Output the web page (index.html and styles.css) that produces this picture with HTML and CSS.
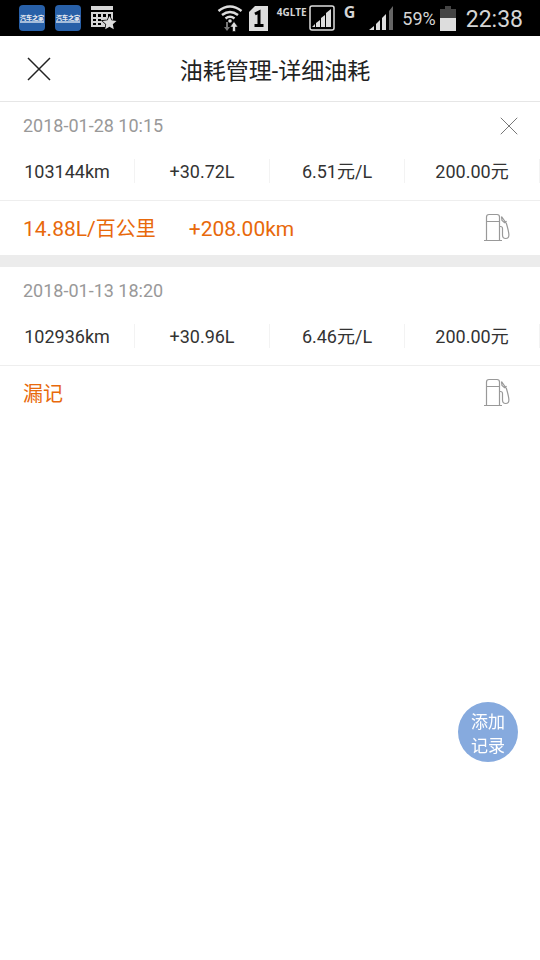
FILE: index.html
```html
<!DOCTYPE html>
<html lang="zh-CN">
<head>
<meta charset="utf-8">
<meta name="viewport" content="width=device-width, initial-scale=1">
<title>油耗管理-详细油耗</title>
<link rel="stylesheet" href="styles.css">
</head>
<body>
<svg class="defs" aria-hidden="true">
  <symbol id="pump" viewBox="0 0 28 30">
    <path d="M3.500 27V4q0-2.500 2.500-2.500h8q2.500 0 2.500 2.500V27M3.500 8.500h13M1 27.500h18M16.500 13.500h1q2 0 2 2v6.500q0 3.500 3.200 3.500t3.200-3.500q0-3-2.500-11.500L18.500 3.500M18.500 3.500l.5 4 3 2.500M22 10l1.500-2"/>
  </symbol>
  <symbol id="cross" viewBox="0 0 24 24"><path d="M1 1l22 22M23 1L1 23" vector-effect="non-scaling-stroke"/></symbol>
</svg>
<div class="status">
  <div class="notices">
    <span class="app"><b>汽车之家</b><i></i></span>
    <span class="app"><b>汽车之家</b><i></i></span>
    <svg class="calendar" width="26" height="24" viewBox="0 0 26 24">
      <path fill="#d5d5d5" d="M0 0h22v4H0zM0 6h22v15H0z"/>
      <path fill="#000" d="M2 8h3v3H2zM7 8h3v3H7zM12 8h3v3h-3zM17 8h3v3h-3zM2 13h3v2H2zM7 13h3v2H7zM2 17h3v2H2zM7 17h3v2H7z"/>
      <path fill="#ddd" stroke="#000" stroke-width="1.500" paint-order="stroke" d="M18.500 10l2 4.300 5 .6-3.700 3.300 1 5-4.300-2.500-4.300 2.500 1-5-3.700-3.300 5-.6z"/>
    </svg>
  </div>
  <div class="signals">
    <svg class="wifi" width="26" height="28" viewBox="0 0 26 28">
      <path fill="none" stroke="#ddd" stroke-width="2.500" d="M1.500 7q11.500-9 23 0M5 11q8-6 16 0M8.500 14.500q4.500-3.500 9 0"/>
      <circle cx="13" cy="17" r="1.800" fill="#ddd"/>
      <path fill="#777" d="M9 18h2v5h2l-3 4-3-4h2z"/><path fill="#ddd" stroke="#000" stroke-width=".6" d="M15.500 27.500h3v-4.500h2.500l-4-5.500-4 5.500h2.500z"/>
    </svg>
    <svg class="sim" width="20" height="25" viewBox="0 0 20 25"><path fill="#ddd" d="M6 0h13v25H0V6z"/><path fill="none" stroke="#000" stroke-width="3" d="M6 8l4-2v13M5.500 19.500h9"/></svg>
    <span class="net">4GLTE</span>
    <svg class="boxed" width="26" height="26" viewBox="0 0 26 26"><rect x="1" y="1" width="24" height="24" rx="2" fill="none" stroke="#ddd" stroke-width="1.500"/><path fill="#ddd" d="M3 22l3-3v3zM7 18l4-3v7H7zM12 13l4-3v12h-4zM17 8l5-4v18h-5z"/></svg>
    <span class="g">G</span>
    <svg class="bars" width="26" height="26" viewBox="0 0 26 26"><path fill="#ddd" d="M0 25l5-4v4zM7 19l4-4v10H7zM13 13l4-4v16h-4z"/><path fill="#666" d="M20 6l4-5v24h-4z"/></svg>
    <span class="percent">59%</span>
    <svg class="battery" width="16" height="25" viewBox="0 0 16 25"><path fill="#444" d="M5 0h6v3h5v9H0V3h5z"/><path fill="#ddd" d="M0 12h16v13H0z"/></svg>
    <time class="clock">22:38</time>
  </div>
</div>
<header class="bar">
  <button class="close" type="button" aria-label="关闭"><svg width="24" height="24"><use href="#cross"/></svg></button>
  <h1>油耗管理-详细油耗</h1>
</header>
<main>
  <article class="record">
    <div class="date"><time>2018-01-28 10:15</time><button class="delete" type="button" aria-label="删除"><svg width="18" height="18"><use href="#cross"/></svg></button></div>
    <ul class="stats"><li>103144km</li><li>+30.72L</li><li>6.51元/L</li><li>200.00元</li></ul>
    <div class="summary"><span>14.88L/<span class="han">百公里</span></span><span>+208.00km</span><svg class="pump" width="28" height="30"><use href="#pump"/></svg></div>
  </article>
  <article class="record">
    <div class="date"><time>2018-01-13 18:20</time></div>
    <ul class="stats"><li>102936km</li><li>+30.96L</li><li>6.46元/L</li><li>200.00元</li></ul>
    <div class="summary"><span class="han">漏记</span><svg class="pump" width="28" height="30"><use href="#pump"/></svg></div>
  </article>
</main>
<button class="add" type="button">添加<br>记录</button>
</body>
</html>
```
FILE: styles.css
```css
* { box-sizing: border-box; }
body {
  margin: 0;
  min-height: 100vh;
  background: #fff;
  color: #333;
  font-family: Roboto, "Noto Sans CJK SC", sans-serif;
  font-size: 18px;
}
button { border: 0; padding: 0; background: none; font: inherit; cursor: pointer; }
svg { display: block; flex: none; }
.defs { position: absolute; width: 0; height: 0; }

.status {
  display: flex;
  justify-content: space-between;
  height: 36px;
  padding: 0 17px 0 19px;
  background: #000;
  color: #d5d5d5;
}
.notices, .signals { display: flex; align-items: center; }
.notices { gap: 10px; }
.app {
  display: flex;
  flex-direction: column;
  align-items: center;
  justify-content: center;
  width: 26px;
  height: 26px;
  border-radius: 4px;
  background: #2860a8;
  color: #e4e8ef;
}
.app b { font-size: 6px; line-height: 7px; font-weight: 900; white-space: nowrap; }
.app i { width: 24px; height: 2px; background: #a5bddb; }
.wifi { margin-right: 6px; }
.sim { margin-right: 8px; }
.net { align-self: flex-start; margin: 6px 2px 0 0; font: 700 10px/12px "Open Sans", sans-serif; }
.boxed { margin-right: 9px; }
.g { align-self: flex-start; margin: 3px 14px 0 0; font: 700 16px/18px "Open Sans", sans-serif; }
.bars { margin-right: 7px; }
.percent { margin-right: 4px; padding-top: 2px; line-height: 20px; }
.battery { margin-right: 10px; }
.clock { padding-top: 4px; font-size: 23px; line-height: 28px; }

.bar {
  display: grid;
  grid-template-columns: 78px 1fr 68px;
  align-items: center;
  height: 66px;
  border-bottom: 1px solid #e6e6e6;
}
.bar h1 { margin: 0; padding-top: 6px; font-size: 23px; line-height: 34px; font-weight: 400; text-align: center; color: #222; }
.close { display: grid; place-items: center; height: 48px; color: #222; }
.close svg, .delete svg { fill: none; stroke: currentColor; }
.close svg { stroke-width: 1.5px; }

.record + .record { border-top: 12px solid #ececec; }
.date {
  display: flex;
  align-items: center;
  justify-content: space-between;
  height: 47px;
  padding: 0 22px 0 23px;
  color: #999;
}
.delete { color: #777; }
.stats {
  display: grid;
  grid-template-columns: repeat(4, 1fr);
  align-items: center;
  height: 52px;
  margin: 0;
  padding: 0 0 8px;
  list-style: none;
  border-bottom: 1px solid #eee;
  text-align: center;
}
.stats li { height: 24px; line-height: 26px; border-right: 1px solid #f3f3f3; }
.summary {
  display: flex;
  align-items: center;
  gap: 33px;
  height: 54px;
  padding: 0 29px 0 23px;
  color: #e8690b;
  font-size: 21px;
  line-height: 24px;
}
.summary > span { padding-top: 2px; }
.han { font-size: 20px; }
.pump { margin-left: auto; fill: none; stroke: #999; stroke-width: 1.2px; }

.add {
  position: fixed;
  right: 22px;
  bottom: 198px;
  width: 60px;
  height: 60px;
  padding-top: 3px;
  border-radius: 50%;
  background: #86aade;
  color: #fff;
  font-size: 17px;
  line-height: 24px;
}
```
